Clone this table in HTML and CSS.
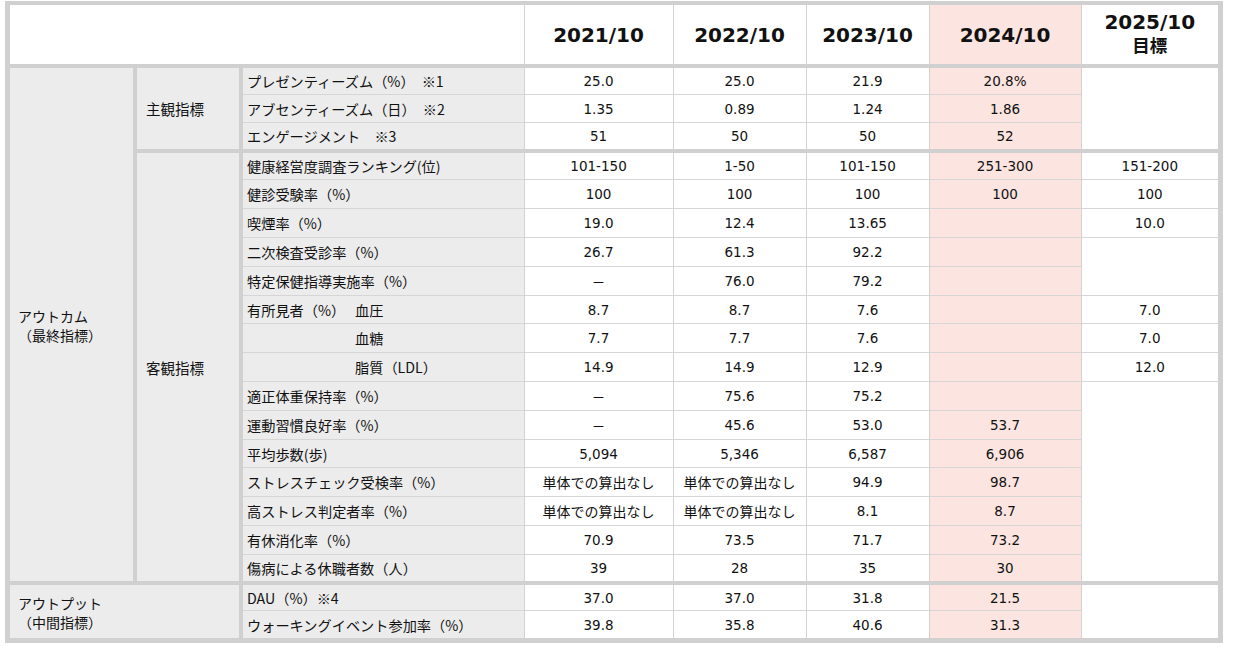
FILE: index.html
```html
<!DOCTYPE html>
<html lang="ja">
<head>
<meta charset="utf-8">
<title>健康経営 指標</title>
<link rel="stylesheet" href="styles.css">
</head>
<body>
<div class="frame">
<table class="tbl">
  <colgroup>
    <col class="c-cat"><col class="c-sub"><col class="c-lbl">
    <col class="c-21"><col class="c-22"><col class="c-23"><col class="c-24"><col class="c-25">
  </colgroup>
  <thead>
    <tr class="r-head">
      <th class="hd hd-blank" colspan="3"></th>
      <th class="hd">2021/10</th>
      <th class="hd">2022/10</th>
      <th class="hd">2023/10</th>
      <th class="hd pk">2024/10</th>
      <th class="hd hd-two"><span class="hd-l1">2025/10</span><span class="hd-ja">目標</span></th>
    </tr>
  </thead>
  <tbody>
    <tr class="r-s sec">
      <td class="cat" rowspan="18"><span class="cat-line">アウトカム</span><span class="cat-line">（最終指標）</span></td>
      <td class="sub" rowspan="3">主観指標</td>
      <td class="lbl">プレゼンティーズム（%）　※1</td>
      <td class="num">25.0</td><td class="num">25.0</td><td class="num">21.9</td><td class="num pk">20.8%</td>
      <td class="num" rowspan="3"></td>
    </tr>
    <tr class="r-s">
      <td class="lbl">アブセンティーズム（日）　※2</td>
      <td class="num">1.35</td><td class="num">0.89</td><td class="num">1.24</td><td class="num pk">1.86</td>
    </tr>
    <tr class="r-s">
      <td class="lbl">エンゲージメント　※3</td>
      <td class="num">51</td><td class="num">50</td><td class="num">50</td><td class="num pk">52</td>
    </tr>

    <tr class="r-o sec">
      <td class="sub" rowspan="15">客観指標</td>
      <td class="lbl">健康経営度調査ランキング(位)</td>
      <td class="num">101-150</td><td class="num">1-50</td><td class="num">101-150</td><td class="num pk">251-300</td><td class="num">151-200</td>
    </tr>
    <tr class="r-o">
      <td class="lbl">健診受験率（%）</td>
      <td class="num">100</td><td class="num">100</td><td class="num">100</td><td class="num pk">100</td><td class="num">100</td>
    </tr>
    <tr class="r-o">
      <td class="lbl">喫煙率（%）</td>
      <td class="num">19.0</td><td class="num">12.4</td><td class="num">13.65</td><td class="num pk"></td><td class="num">10.0</td>
    </tr>
    <tr class="r-o">
      <td class="lbl">二次検査受診率（%）</td>
      <td class="num">26.7</td><td class="num">61.3</td><td class="num">92.2</td><td class="num pk"></td>
      <td class="num" rowspan="2"></td>
    </tr>
    <tr class="r-o">
      <td class="lbl">特定保健指導実施率（%）</td>
      <td class="num dash">－</td><td class="num">76.0</td><td class="num">79.2</td><td class="num pk"></td>
    </tr>
    <tr class="r-o">
      <td class="lbl"><span class="lbl-main">有所見者（%）</span>血圧</td>
      <td class="num">8.7</td><td class="num">8.7</td><td class="num">7.6</td><td class="num pk"></td><td class="num">7.0</td>
    </tr>
    <tr class="r-o">
      <td class="lbl"><span class="lbl-main"></span>血糖</td>
      <td class="num">7.7</td><td class="num">7.7</td><td class="num">7.6</td><td class="num pk"></td><td class="num">7.0</td>
    </tr>
    <tr class="r-o">
      <td class="lbl"><span class="lbl-main"></span>脂質（LDL）</td>
      <td class="num">14.9</td><td class="num">14.9</td><td class="num">12.9</td><td class="num pk"></td><td class="num">12.0</td>
    </tr>
    <tr class="r-o">
      <td class="lbl">適正体重保持率（%）</td>
      <td class="num dash">－</td><td class="num">75.6</td><td class="num">75.2</td><td class="num pk"></td>
      <td class="num" rowspan="7"></td>
    </tr>
    <tr class="r-o">
      <td class="lbl">運動習慣良好率（%）</td>
      <td class="num dash">－</td><td class="num">45.6</td><td class="num">53.0</td><td class="num pk">53.7</td>
    </tr>
    <tr class="r-o">
      <td class="lbl">平均歩数(歩)</td>
      <td class="num">5,094</td><td class="num">5,346</td><td class="num">6,587</td><td class="num pk">6,906</td>
    </tr>
    <tr class="r-o">
      <td class="lbl">ストレスチェック受検率（%）</td>
      <td class="num ja">単体での算出なし</td><td class="num ja">単体での算出なし</td><td class="num">94.9</td><td class="num pk">98.7</td>
    </tr>
    <tr class="r-o">
      <td class="lbl">高ストレス判定者率（%）</td>
      <td class="num ja">単体での算出なし</td><td class="num ja">単体での算出なし</td><td class="num">8.1</td><td class="num pk">8.7</td>
    </tr>
    <tr class="r-o">
      <td class="lbl">有休消化率（%）</td>
      <td class="num">70.9</td><td class="num">73.5</td><td class="num">71.7</td><td class="num pk">73.2</td>
    </tr>
    <tr class="r-o">
      <td class="lbl">傷病による休職者数（人）</td>
      <td class="num">39</td><td class="num">28</td><td class="num">35</td><td class="num pk">30</td>
    </tr>

    <tr class="r-p sec">
      <td class="cat cat-wide" colspan="2" rowspan="2"><span class="cat-line">アウトプット</span><span class="cat-line">（中間指標）</span></td>
      <td class="lbl">DAU（%）※4</td>
      <td class="num">37.0</td><td class="num">37.0</td><td class="num">31.8</td><td class="num pk">21.5</td>
      <td class="num" rowspan="2"></td>
    </tr>
    <tr class="r-p">
      <td class="lbl">ウォーキングイベント参加率（%）</td>
      <td class="num">39.8</td><td class="num">35.8</td><td class="num">40.6</td><td class="num pk">31.3</td>
    </tr>
  </tbody>
</table>
</div>
</body>
</html>
```

FILE: styles.css
```css
html, body {
  margin: 0;
  padding: 0;
  background: #ffffff;
}

.frame {
  margin: 1px 0 0 5px;
  width: 1208px;
  border: 5px solid #d0d0d0;
  border-top-width: 4px;
}

.tbl {
  width: 1208px;
  table-layout: fixed;
  border-collapse: collapse;
  border-style: hidden;
  font-family: "Noto Sans CJK JP", "DejaVu Sans", sans-serif;
  color: #111111;
}

.c-cat { width: 125px; }
.c-sub { width: 106px; }
.c-lbl { width: 283px; }
.c-21 { width: 149px; }
.c-22 { width: 133px; }
.c-23 { width: 123px; }
.c-24 { width: 152px; }
.c-25 { width: 137px; }

.r-head { height: 61px; }
.r-s { height: 28.4px; }
.r-o { height: 28.8px; }
.r-p { height: 27.6px; }

td, th {
  padding: 0;
  vertical-align: middle;
}

.hd {
  background: #ffffff;
  font-family: "DejaVu Sans", "Noto Sans CJK JP", sans-serif;
  font-weight: bold;
  font-size: 20px;
  text-align: center;
  color: #111111;
  border-left: 1px solid #d3d3d3;
  border-bottom: 4px solid #d0d0d0;
}

.hd-two {
  padding-bottom: 2px;
}

.hd-l1 {
  display: block;
  line-height: 22px;
  height: 22px;
  overflow: hidden;
}

.hd-ja {
  display: block;
  font-family: "Noto Sans CJK JP", sans-serif;
  font-size: 17.5px;
  font-weight: bold;
  line-height: 24px;
  height: 24px;
  overflow: hidden;
}

.cat {
  background: #ececec;
  font-size: 14px;
  text-align: left;
  padding-left: 8px;
  border-right: 4px solid #d0d0d0;
}

.cat-line {
  display: block;
  line-height: 20px;
  height: 19px;
  overflow: hidden;
}

.sub {
  background: #ececec;
  font-size: 14.5px;
  text-align: left;
  padding-left: 9px;
  border-right: 4px solid #d0d0d0;
}

.lbl {
  background: #ececec;
  font-size: 14.2px;
  padding-left: 4px;
  white-space: nowrap;
  border-top: 1px solid #d6d6d6;
  border-right: 1px solid #d3d3d3;
}

.lbl-main {
  display: inline-block;
  width: 108px;
}

.num {
  background: #ffffff;
  font-family: "DejaVu Sans", "Noto Sans CJK JP", sans-serif;
  font-size: 13.5px;
  text-align: center;
  border-top: 1px solid #d6d6d6;
  border-left: 1px solid #d3d3d3;
}

.num.ja {
  font-family: "Noto Sans CJK JP", sans-serif;
  font-size: 14px;
}

.num.dash {
  font-family: "Noto Sans CJK JP", sans-serif;
}

.pk {
  background: #fce5e0;
  border-left: 1px solid #d8cfcd;
  border-right: 1px solid #d8cfcd;
}

.sec > td {
  border-top: 4px solid #d0d0d0;
}

.sec > td.cat {
  border-top: 0;
}

.sec > td.cat-wide {
  border-top: 4px solid #d0d0d0;
}
```
